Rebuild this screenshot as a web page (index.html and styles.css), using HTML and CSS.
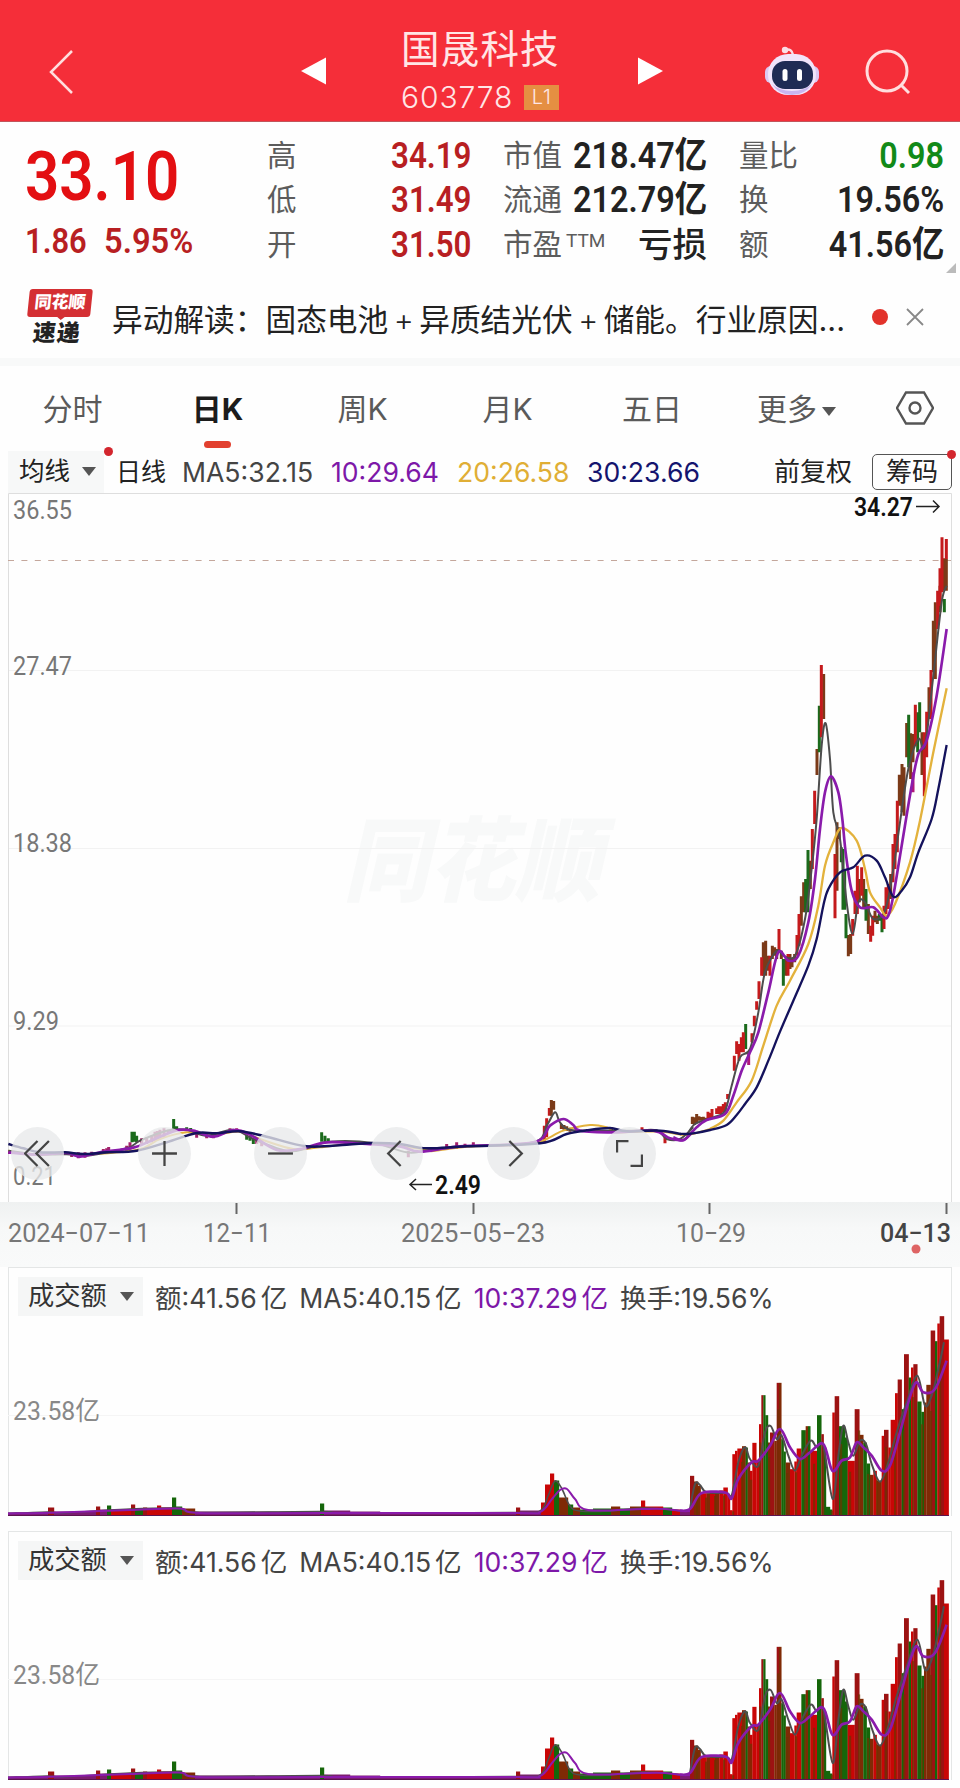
FILE: index.html
```
<!DOCTYPE html>
<html lang="zh-CN">
<head>
    <meta charset="UTF-8">
    <meta name="viewport" content="width=device-width, initial-scale=1.0">
    <title>国晟科技 603778</title>
    <link rel="stylesheet" href="styles.css">
</head>
<body>
    <header class="header">
        <svg class="back" viewBox="0 0 26 46"><path d="M24 2 3 23 24 44"/></svg>
        <svg class="prev" viewBox="0 0 26 28"><path d="M0 14 26 0V28Z"/></svg>
        <div class="title">
            <h1>国晟科技</h1>
            <div class="code"><span>603778</span><b>L1</b></div>
        </div>
        <svg class="next" viewBox="0 0 26 28"><path d="M26 14 0 0V28Z"/></svg>
        <svg class="robot" viewBox="0 0 54 50">
            <path d="M20 4Q27 2 28 9" fill="none" stroke="#fbdde6" stroke-width="2.5"/>
            <circle cx="20" cy="4" r="3.2" fill="#fbdde6"/>
            <rect x="0" y="20" width="12" height="17" rx="6" fill="#dcc8f2"/>
            <rect x="42" y="20" width="12" height="17" rx="6" fill="#dcc8f2"/>
            <rect x="3" y="8" width="48" height="41" rx="20" fill="#f1e4fa"/>
            <path d="M7 38Q14 49 27 49T47 38Q40 45 27 45T7 38Z" fill="#c9b5f0"/>
            <rect x="7" y="15" width="41" height="28" rx="13" fill="#1f2b54"/>
            <rect x="17.500" y="23" width="5" height="12" rx="2.500" fill="#fff"/>
            <rect x="32" y="23" width="5" height="12" rx="2.500" fill="#fff"/>
        </svg>
        <svg class="search" viewBox="0 0 46 46"><circle cx="22" cy="22" r="20"/><path d="M36 36 44 44"/></svg>
    </header>

    <section class="quote">
        <div class="price">
            <div class="last"><span class="din">33.10</span></div>
            <div class="change"><span class="din">1.86</span><span class="din pct">5.95%</span></div>
        </div>
        <dl class="stats c1">
            <dt>高</dt><dd class="up"><span class="din">34.19</span></dd>
            <dt>低</dt><dd class="up"><span class="din">31.49</span></dd>
            <dt>开</dt><dd class="up"><span class="din">31.50</span></dd>
        </dl>
        <dl class="stats c2">
            <dt>市值</dt><dd><span class="din">218.47亿</span></dd>
            <dt>流通</dt><dd><span class="din">212.79亿</span></dd>
            <dt>市盈<sup>TTM</sup></dt><dd class="loss">亏损</dd>
        </dl>
        <dl class="stats c3">
            <dt>量比</dt><dd class="down"><span class="din">0.98</span></dd>
            <dt>换</dt><dd><span class="din">19.56%</span></dd>
            <dt>额</dt><dd><span class="din">41.56亿</span></dd>
        </dl>
        <svg class="corner" viewBox="0 0 10 10"><path d="M10 0V10H0Z"/></svg>
    </section>

    <section class="news">
        <div class="logo">
            <span class="logo-top">同花顺</span>
            <span class="logo-bottom">速递</span>
        </div>
        <p>异动解读：固态电池<i>+</i>异质结光伏<i>+</i>储能。行业原因...</p>
        <i class="dot"></i>
        <svg class="close" viewBox="0 0 18 18"><path d="M1 1 17 17M17 1 1 17"/></svg>
    </section>

    <nav class="tabs">
        <a>分时</a>
        <a class="active">日K</a>
        <a>周K</a>
        <a>月K</a>
        <a>五日</a>
        <a class="more">更多<i class="caret"></i></a>
        <svg class="setting" viewBox="0 0 38 34"><path d="M10 1.500H28L37 17 28 32.500H10L1 17Z"/><circle cx="19" cy="17" r="5.500"/></svg>
    </nav>

    <div class="ma-bar">
        <span class="select">均线<i class="caret"></i></span>
        <span class="cycle">日线</span>
        <span class="ma ma5">MA5:32.15</span>
        <span class="ma ma10">10:29.64</span>
        <span class="ma ma20">20:26.58</span>
        <span class="ma ma30">30:23.66</span>
        <span class="adjust">前复权</span>
        <span class="chips">筹码</span>
    </div>

    <div class="kline">
        <svg id="kline" viewBox="8 494 952 709">
            <text class="watermark" x="343" y="895" textLength="258" lengthAdjust="spacingAndGlyphs">同花顺</text>
            <path class="grid" d="M8 671.500H951M8 849.500H951M8 1027H951"/>
            <path class="frame" d="M8.500 1203V494.500H951.500V1203"/>
            <path class="now" d="M8 561.500H951"/>
            <g class="axis">
                <text x="13" y="520" textLength="59" lengthAdjust="spacingAndGlyphs">36.55</text>
                <text x="13" y="676" textLength="59" lengthAdjust="spacingAndGlyphs">27.47</text>
                <text x="13" y="853" textLength="59" lengthAdjust="spacingAndGlyphs">18.38</text>
                <text x="13" y="1031" textLength="46" lengthAdjust="spacingAndGlyphs">9.29</text>
                <text x="13" y="1186" textLength="43" lengthAdjust="spacingAndGlyphs">0.21</text>
            </g>
            <g id="early" transform="translate(0 1090) scale(.33333)"></g>
            <g id="late" transform="translate(680 820) scale(.33333)"></g>
            <g class="mark">
                <text x="854" y="517" textLength="59" lengthAdjust="spacingAndGlyphs">34.27</text>
                <path d="M916 507.500H939M933 501.500 939 507.500 933 513.500"/>
                <text x="435" y="1195" textLength="46" lengthAdjust="spacingAndGlyphs">2.49</text>
                <path d="M432 1185.500H410M416 1180 410 1185.500 416 1191"/>
            </g>
        </svg>
        <div class="tools">
            <button><svg viewBox="0 0 26 26"><path d="M13 1 1 13 13 25M24 1 12 13 24 25"/></svg></button>
            <button><svg viewBox="0 0 26 26"><path d="M1 13H25M13 1V25"/></svg></button>
            <button><svg viewBox="0 0 26 26"><path d="M1 13H25"/></svg></button>
            <button><svg viewBox="0 0 26 26"><path d="M17 1 5 13 17 25"/></svg></button>
            <button><svg viewBox="0 0 26 26"><path d="M9 1 21 13 9 25"/></svg></button>
            <button><svg viewBox="0 0 26 26"><path d="M1 12V1H12M25 14V25H14"/></svg></button>
        </div>
    </div>

    <svg class="dates" viewBox="0 1203 960 65">
        <path d="M236.500 1204V1215M473.500 1204V1215M709.500 1204V1215M946.500 1204V1215"/>
        <text x="8" y="1243" textLength="142" lengthAdjust="spacingAndGlyphs">2024−07−11</text>
        <text x="203" y="1243" textLength="68" lengthAdjust="spacingAndGlyphs">12−11</text>
        <text x="401" y="1243" textLength="144" lengthAdjust="spacingAndGlyphs">2025−05−23</text>
        <text x="676" y="1243" textLength="70" lengthAdjust="spacingAndGlyphs">10−29</text>
        <text class="today" x="880" y="1243" textLength="71" lengthAdjust="spacingAndGlyphs">04−13</text>
        <circle cx="916" cy="1250" r="4.500"/>
    </svg>

    <section class="volume">
        <div class="volume-bar">
            <span class="select">成交额<i class="caret"></i></span>
            <span>额:41.56<em>亿</em></span>
            <span>MA5:40.15<em>亿</em></span>
            <span class="ma10">10:37.29<em>亿</em></span>
            <span>换手:19.56%</span>
        </div>
        <svg class="volume-chart" viewBox="8 1310 944 207"></svg>
    </section>
    <section class="volume">
        <div class="volume-bar">
            <span class="select">成交额<i class="caret"></i></span>
            <span>额:41.56<em>亿</em></span>
            <span>MA5:40.15<em>亿</em></span>
            <span class="ma10">10:37.29<em>亿</em></span>
            <span>换手:19.56%</span>
        </div>
        <svg class="volume-chart" viewBox="8 1310 944 207"></svg>
    </section>

    <script src="chart.js"></script>
</body>
</html>
```
FILE: styles.css
```
body {
    margin: 0;
    width: 960px;
    height: 1788px;
    overflow: hidden;
    background: #fefefe;
    color: #222;
    font-family: Inter, "Noto Sans CJK SC", sans-serif;
}
svg {
    display: block;
    flex: none;
}
.header {
    display: flex;
    align-items: flex-start;
    height: 122px;
    background: #f52e39;
    border-bottom: 1px solid #c2555b;
    box-sizing: border-box;
    color: #ffe6e6;
}
.back, .search {
    fill: none;
    stroke: #ffdede;
    stroke-width: 2.5;
}
.back {
    width: 26px;
    height: 46px;
    margin: 49px 0 0 48px;
}
.prev, .next {
    width: 25px;
    height: 28px;
    fill: #fff;
    margin-top: 57px;
}
.prev {
    margin-left: 227px;
}
.title {
    width: 162px;
    margin: 22px 0 0 75px;
}
h1 {
    margin: 0;
    font-size: 38.5px;
    line-height: 54px;
    font-weight: 400;
    letter-spacing: 1.2px;
    white-space: nowrap;
}
.code {
    display: flex;
    align-items: center;
    height: 42px;
    font-size: 30px;
    font-weight: 300;
    letter-spacing: .9px;
}
.code b {
    width: 35px;
    height: 25px;
    margin-left: 11px;
    background: #e58f42;
    font-size: 20px;
    line-height: 25px;
    font-weight: 300;
    text-align: center;
}
.next {
    margin-left: 75px;
}
.robot {
    width: 54px;
    height: 50px;
    margin: 46px 0 0 102px;
}
.search {
    width: 46px;
    height: 46px;
    margin: 49px 0 0 46px;
    stroke-width: 3;
}

.quote {
    position: relative;
    display: flex;
    height: 154px;
    padding-top: 12px;
    font-family: Roboto, "Noto Sans CJK SC", sans-serif;
}
.din {
    display: inline-block;
    transform: scaleX(.87);
    transform-origin: right center;
    white-space: nowrap;
    font-weight: 600;
}
.price {
    width: 267px;
    padding-left: 25px;
    box-sizing: border-box;
    color: #b81f22;
}
.price .din {
    transform-origin: left center;
}
.last {
    height: 85px;
    line-height: 86px;
    font-size: 69px;
    color: #e30f12;
}
.change {
    display: flex;
    height: 44px;
    line-height: 44px;
    font-size: 35.5px;
}
.change .din {
    width: 79px;
}
.change .pct {
    transform: scaleX(.92);
}
.stats {
    display: grid;
    grid-template-columns: auto 1fr;
    grid-auto-rows: 44.3px;
    margin: 0;
    line-height: 44px;
    white-space: nowrap;
}
.stats dt {
    font-size: 29.5px;
    color: #5c5c5c;
}
.stats dd {
    margin: 0;
    min-width: 0;
    display: flex;
    justify-content: flex-end;
    font-size: 36px;
}
.c1 { width: 204px; }
.c2 { width: 204px; margin-left: 32px; }
.c3 { width: 205px; margin-left: 32px; }
.c2 .din, .c3 .din {
    transform: scaleX(.9);
}
.stats sup {
    font-size: 19px;
    line-height: 0;
    margin-left: 4px;
    vertical-align: 8px;
}
.stats .loss {
    font-size: 34.5px;
    font-weight: 500;
}
.stats .up { color: #b81f22; }
.stats .down { color: #128a18; }
.corner {
    position: absolute;
    right: 4px;
    bottom: 15px;
    width: 10px;
    height: 10px;
    fill: #bbb;
}

.news {
    display: flex;
    align-items: center;
    height: 70px;
    padding: 0 36px 6px 27px;
    margin-top: -6px;
}
.logo {
    flex: none;
    width: 63px;
    height: 56px;
    margin-right: 3px;
    text-align: center;
    font-weight: 900;
    transform: skewX(-6deg);
}
.logo-top, .logo-bottom {
    display: block;
    white-space: nowrap;
}
.logo-top {
    position: relative;
    height: 28px;
    line-height: 27px;
    border-radius: 3px;
    background: #d42f33;
    color: #fff;
    font-size: 17px;
}
.logo-top::after {
    content: '';
    position: absolute;
    left: 29px;
    top: 27px;
    border: 5px solid transparent;
    border-top: 4px solid #d42f33;
    border-bottom: 0;
}
.logo-bottom {
    font-size: 23px;
    line-height: 32px;
    letter-spacing: 1px;
}
.news p {
    width: 745px;
    margin: 0 0 0 19px;
    font-size: 30.7px;
    white-space: nowrap;
}
.news p i {
    display: inline-block;
    width: 31px;
    text-align: center;
    font-style: normal;
    font-weight: 300;
}
.dot {
    width: 16px;
    height: 16px;
    border-radius: 50%;
    background: #e2322b;
    margin-left: 17px;
}
.close {
    width: 18px;
    height: 18px;
    margin-left: 18px;
    fill: none;
    stroke: #888;
    stroke-width: 1.8;
}

.tabs {
    display: flex;
    align-items: center;
    height: 84px;
    border-top: 8px solid #f8f9f9;
    padding-left: 8px;
    font-size: 30px;
    color: #5a5a5a;
}
.tabs a {
    position: relative;
    top: -1px;
    width: 129px;
    text-align: center;
}
.tabs a:nth-child(2),
.tabs a:nth-child(3),
.tabs a:nth-child(4) {
    width: 145px;
}
.tabs a:nth-child(5) {
    width: 144px;
}
.tabs a.active {
    margin-left: 8px;
    color: #1c1c1c;
    font-weight: 700;
}
.tabs .active::after {
    content: '';
    position: absolute;
    left: 59px;
    bottom: -19px;
    width: 27px;
    height: 7px;
    border-radius: 4px;
    background: #e2402f;
}
.tabs .more {
    width: 145px;
}
.caret {
    display: inline-block;
    border: 7px solid transparent;
    border-top: 9px solid #555;
    border-bottom: 0;
    vertical-align: 4px;
    margin-left: 7px;
}
.more .caret {
    margin-left: 5px;
}
.setting {
    width: 38px;
    height: 34px;
    margin-left: 27px;
    fill: none;
    stroke: #555;
    stroke-width: 2.4;
}

.ma-bar {
    position: relative;
    display: flex;
    align-items: center;
    height: 43px;
    margin-left: 8px;
    font-size: 26px;
    line-height: 40px;
    color: #222;
    white-space: nowrap;
}
.ma-bar .select {
    position: relative;
    width: 96px;
    height: 42px;
    line-height: 40px;
    padding-left: 11px;
    box-sizing: border-box;
    background: #f7f8f8;
    font-size: 25.5px;
}
.ma-bar .caret {
    margin-left: 12px;
}
.ma-bar .select::after, .chips::after {
    content: '';
    position: absolute;
    width: 9px;
    height: 9px;
    border-radius: 50%;
    background: #d3262e;
    right: -9px;
    top: -4px;
}
.cycle {
    width: 66px;
    margin-left: 12px;
    font-size: 25px;
}
.ma {
    font-size: 26.6px;
}
.ma5 { width: 149px; color: #444; }
.ma10 { color: #7d18a8; }
.ma-bar .ma10 { width: 126px; }
.ma20 { width: 130px; color: #e0ae35; }
.ma30 { width: 187px; color: #14146e; }
.adjust {
    width: 98px;
}
.chips {
    position: relative;
    width: 78px;
    height: 34px;
    line-height: 34px;
    border: 1px solid #555;
    border-radius: 5px;
    text-align: center;
}
.chips::after {
    right: -5px;
    top: -5px;
}

.kline {
    position: relative;
    height: 709px;
    margin-left: 8px;
}
.kline > svg {
    width: 952px;
    height: 709px;
}
.grid {
    stroke: #f2f2f2;
}
.frame {
    fill: none;
    stroke: #dedede;
}
.now {
    stroke: #c4a79c;
    stroke-dasharray: 6 7.4;
}
.watermark {
    font: italic 900 92px "Noto Sans CJK SC";
    fill: #f8f9f9;
}
.axis, .mark, .dates {
    font-family: Roboto, sans-serif;
    font-size: 26px;
    fill: #777;
}
.mark {
    fill: #111;
    font-weight: 600;
}
.mark path {
    fill: none;
    stroke: #222;
    stroke-width: 1.5;
}
.tools {
    position: absolute;
    left: 3px;
    top: 634px;
    display: flex;
    gap: 63.3px;
}
.tools button {
    width: 53px;
    height: 53px;
    padding: 13px;
    border: 0;
    border-radius: 50%;
    background: rgba(232, 233, 234, .78);
}
.tools button:first-child {
    margin-right: 10.500px;
}
.tools svg {
    width: 27px;
    height: 27px;
    fill: none;
    stroke: #444;
    stroke-width: 2.2;
}

.dates {
    width: 960px;
    height: 65px;
    background: linear-gradient(#eff1f1, #f7f8f8 40%, #f9fafa);
}
.dates path {
    stroke: #666;
    stroke-width: 2;
}
.dates .today {
    fill: #444;
    font-weight: 500;
}
.dates circle {
    fill: #de6464;
}

.volume {
    height: 249px;
    margin: 0 8px 15px;
    border: solid #e4e6e6;
    border-width: 1px 1px 0;
    box-sizing: border-box;
}
.volume-bar {
    display: flex;
    align-items: center;
    height: 41px;
    padding: 8px 0 0 9px;
    font-size: 26.600px;
    color: #444;
    white-space: nowrap;
}
.volume-bar .select {
    width: 125px;
    height: 39px;
    line-height: 37px;
    padding-left: 10px;
    box-sizing: border-box;
    background: #f5f6f6;
    font-size: 26.300px;
    color: #333;
}
.volume-bar .caret {
    margin-left: 13px;
}
.volume-bar span + span {
    margin-left: 12px;
}
.volume-bar em {
    font-style: normal;
    margin-left: 4px;
}
.volume-bar .ma10 {
    color: #7d18a8;
}
.volume-chart {
    width: 944px;
    height: 207px;
    margin: -8px 0 0 -1px;
    overflow: visible;
}
.vol-label {
    font-family: Roboto, "Noto Sans CJK SC", sans-serif;
    font-size: 26px;
    fill: #888;
}
```
FILE: chart.js
```
const RED = '#c41a1c', BROWN = '#7b3a18', GREEN = '#1b6a1c';
const MA5 = '#4d4d4d', MA10 = '#8a1bab', MA20 = '#e3b23c', MA30 = '#14125c';

function add(parent, tag, attrs, text) {
    const el = document.createElementNS('http://www.w3.org/2000/svg', tag);
    for (const k in attrs) el.setAttribute(k, attrs[k]);
    if (text) el.textContent = text;
    parent.appendChild(el);
    return el;
}

// "x,y x,y ..." -> smooth curve through every point
function line(parent, str, color, width) {
    const p = str.trim().split(/\s+/).map(s => s.split(',').map(Number));
    let d = `M${p[0]}`;
    for (let i = 0; i < p.length - 1; i++) {
        const a = p[i - 1] || p[i], b = p[i], c = p[i + 1], e = p[i + 2] || c;
        d += `C${b[0] + (c[0] - a[0]) / 6},${b[1] + (c[1] - a[1]) / 6} ${c[0] - (e[0] - b[0]) / 6},${c[1] - (e[1] - b[1]) / 6} ${c}`;
    }
    add(parent, 'path', { d, fill: 'none', stroke: color, 'stroke-width': width, 'stroke-linejoin': 'round' });
}

// "x,high,low ..."
function candles(parent, str, color) {
    const d = str.trim().split(/\s+/).map(s => {
        const [x, a, b] = s.split(',');
        return `M${x} ${a}V${b}`;
    }).join('');
    add(parent, 'path', { d, stroke: color, 'stroke-width': 9 });
}

const early = document.getElementById('early');
candles(early, '396,128,160 403,128,158 410,140,160 521,90,122 530,112,124 560,115,126 572,117,128 740,135,152 750,140,155 760,148,165 965,130,158 975,140,160 985,148,162', GREEN);
candles(early, '27,183,195 215,190,204 235,190,208 255,190,206 275,188,200 310,180,195 326,174,192 320,178,192 380,170,185 390,160,182 425,148,168 440,145,165 455,140,160 465,128,155 472,126,152 480,122,150 492,118,145 505,122,135 590,125,146 620,132,148 640,132,148 690,118,130 710,118,130 770,145,165 785,150,172 1225,185,205 1340,165,182 1370,160,180 1395,164,176 1420,160,172', '#a3216a');
candles(early, '1627,155,165 1633,110,160 1640,88,145 1648,57,80 1995,145,163 1926,115,128', RED);
candles(early, '1654,33,80 1661,36,62 1684,105,120 1692,108,122 1700,112,126 1710,116,128 1835,115,125', BROWN);
line(early, '25,185 100,197 200,192 240,197 410,183 480,150 560,130 650,135 720,128 780,150 880,180 960,175 1100,162 1280,182 1300,186 1400,173 1540,168 1620,158 1690,125 1770,108 1820,115 1850,130 1920,128 1990,128 2060,138 2130,120', MA20, 6);
line(early, '25,185 110,196 200,196 260,200 380,178 420,155 500,125 560,122 620,140 700,122 760,150 860,186 920,178 990,158 1120,162 1220,190 1280,185 1400,172 1600,160 1640,110 1665,70 1680,100 1710,122 1800,125 1900,125 1970,124 2000,150 2040,150 2080,115', MA5, 6);
line(early, '25,190 110,197 200,192 240,203 300,190 400,176 460,152 530,124 580,125 640,143 700,123 750,137 830,183 900,180 980,160 1100,165 1200,172 1260,188 1380,172 1600,160 1650,110 1690,90 1720,108 1740,125 1840,130 1960,125 2010,148 2050,153 2080,125', MA10, 8);
line(early, '25,165 70,178 120,190 195,190 250,195 320,190 410,185 500,160 590,132 650,133 720,127 800,143 920,172 1040,167 1120,162 1200,165 1280,178 1400,172 1620,163 1700,135 1760,124 1830,117 1880,127 1980,125 2042,135', MA30, 7.5);

const late = document.getElementById('late');
candles(late, `37,893,915 43,895,918 50,885,912 57,892,905 63,894,905 70,893,905 77,896,905 250,370,470 257,365,470 264,410,455
    277,380,420 284,385,410 290,390,420 304,395,420 317,420,470 330,405,450 336,420,445 344,405,430 364,232,320 371,190,280 391,125,210
    411,-210,-132 431,-435,-300 471,10,215 478,25,60 505,348,412 512,345,405 538,180,250 551,180,270 565,255,345 585,275,310 592,290,315
    632,165,240 658,-133,-40 666,-165,-20 672,-155,-10 680,-288,-185 692,-257,-120 699,-255,-170 726,-260,-132 747,-395,-300
    760,-595,-440 766,-650,-420 780,-700,-620 793,-782,-685 799,-780,-685`, BROWN);
candles(late, `197,615,690 310,420,500 377,180,280 384,93,280 418,-340,-200 484,85,130 489,90,272 494,150,272 498,285,358 558,210,305
    598,285,305 606,285,340 686,-313,-155 713,-320,-200 719,-350,-260 793,-660,-620`, GREEN);
candles(late, `84,878,900 90,882,902 96,870,900 110,868,885 116,862,885 123,862,885 130,855,880 136,850,880 143,825,840 163,710,755
    170,667,705 177,675,725 184,655,700 190,640,700 216,643,670 223,590,622 230,547,572 237,487,540 245,415,470 270,410,470
    297,330,400 324,405,470 351,348,410 357,285,380 397,30,150 404,-85,15 424,-462,-245 465,105,298 518,300,350 525,215,285
    532,140,285 545,145,230 572,320,368 578,290,350 612,260,330 618,205,285 625,195,270 639,75,190 645,45,150 652,-55,100
    706,-343,-220 733,-260,-68 740,-322,-185 753,-447,-300 773,-685,-570 780,-752,-640 786,-845,-680 799,-840,-780`, RED);
candles(late, '206,700,738 699,-140,-80', '#b0187a');
line(late, '20,950 45,915 100,895 135,875 155,800 180,715 210,690 235,580 255,460 290,395 310,410 345,410 375,300 395,150 410,0 425,-220 437,-287 450,-180 460,-20 480,60 500,250 518,345 535,250 555,250 580,300 615,275 640,150 660,10 685,-150 715,-240 735,-220 760,-430 785,-650 800,-700', MA5, 6);
line(late, '90,930 130,905 170,850 215,785 250,680 290,560 330,485 385,375 415,260 435,140 460,70 485,27 530,65 555,150 570,220 600,265 620,290 645,255 690,130 720,5 760,-200 800,-392', MA20, 7);
line(late, '-20,955 12,963 50,925 80,903 135,885 160,830 185,755 210,700 235,640 265,520 295,400 325,425 355,410 385,310 405,180 420,30 435,-80 453,-128 475,-80 487,0 497,100 515,215 540,265 580,265 610,295 625,290 640,230 665,80 695,-100 715,-195 740,-235 770,-370 800,-570', MA10, 8);
line(late, '0,945 40,943 90,933 140,918 170,888 195,855 230,805 265,725 300,638 340,545 385,440 410,360 430,260 445,210 480,160 520,145 555,110 590,125 615,175 640,233 665,215 690,175 715,100 755,0 775,-90 800,-222', MA30, 7);

// turnover: left edge, height, colour; each bar runs to the next left edge
const quiet = [
    [8, 3, 'm'], [48, 8, 'd'], [54, 4, 'm'], [96, 9, 'd'], [100, 6, 'm'], [107, 10, 'g'], [111, 6, 'r'], [131, 11, 'd'], [135, 7, 'g'],
    [143, 8, 'd'], [147, 6, 'r'], [157, 10, 'r'], [161, 8, 'r'], [172, 18, 'g'], [176, 9, 'g'], [182, 7, 'b'], [195, 4, 'm'],
    [320, 12, 'g'], [324, 5, 'm'], [350, 4, 'm'], [380, 3, 'm'], [516, 8, 'd'], [520, 5, 'm'], [541, 13, 'r'], [545, 31, 'r'],
    [550, 42, 'r'], [554, 35, 'g'], [559, 18, 'b'], [568, 11, 'g'], [573, 8, 'b'], [580, 6, 'g'], [593, 7, 'g'], [611, 9, 'b'],
    [620, 7, 'g'], [630, 9, 'b'], [641, 15, 'r'], [645, 9, 'r'], [663, 8, 'g'], [672, 6, 'r'], [680, 5, 'm'], [690, 0, 'm']
];
const busy = [
    [30, 560, 'd'], [42, 577, 'b'], [54, 590, 'b'], [62, 612, 'r'], [80, 612, 'b'], [90, 606, 'r'], [105, 612, 'b'], [118, 604, 'r'],
    [130, 595, 'r'], [143, 620, 'r'], [150, 663, 'r'], [157, 495, 'r'], [165, 485, 'r'], [172, 478, 'r'], [186, 471, 'b'],
    [197, 475, 'g'], [203, 520, 'b'], [210, 545, 'r'], [217, 461, 'r'], [229, 512, 'r'], [237, 405, 'r'], [244, 318, 'd'], [250, 318, 'g'], [256, 378, 'g'],
    [264, 460, 'b'], [270, 430, 'd'], [283, 455, 'b'], [290, 281, 'd'], [297, 281, 'b'], [304, 450, 'g'], [311, 487, 'g'], [317, 520, 'b'],
    [330, 540, 'r'], [343, 517, 'r'], [350, 478, 'r'], [364, 423, 'g'], [377, 411, 'b'], [384, 411, 'g'], [391, 485, 'r'], [411, 378, 'g'],
    [424, 435, 'd'], [431, 475, 'g'], [438, 653, 'g'], [450, 661, 'g'], [457, 370, 'r'], [464, 321, 'd'], [477, 411, 'g'],
    [495, 445, 'g'], [503, 515, 'r'], [524, 360, 'd'], [538, 437, 'b'], [550, 460, 'g'], [560, 523, 'g'], [570, 557, 'b'],
    [580, 545, 'r'], [590, 575, 'b'], [605, 440, 'r'], [612, 422, 'd'], [625, 475, 'r'], [632, 392, 'r'], [645, 312, 'r'],
    [653, 271, 'd'], [665, 360, 'g'], [672, 195, 'd'], [686, 265, 'g'], [693, 235, 'r'], [700, 225, 'd'], [712, 337, 'g'],
    [724, 368, 'g'], [732, 340, 'b'], [739, 287, 'b'], [752, 124, 'd'], [765, 156, 'g'], [772, 103, 'r'], [779, 81, 'd'], [792, 151, 'r'], [806, 679, 'r']
].map(([x, y, c]) => [680 + x / 3, (679 - y) / 3, c]);
const fill = { r: '#c90606', d: '#9c1212', b: '#7f2a05', g: '#15660a', m: '#7c1c70' };

document.querySelectorAll('.volume-chart').forEach(svg => {
    add(svg, 'path', { d: 'M8 1416.5H951', stroke: '#f5f5f5' });
    const bars = quiet.slice(0, -1).concat(busy);
    bars.forEach(([x, h, c], i) => {
        if (i === bars.length - 1) return;
        add(svg, 'rect', { x, y: 1516.5 - h, width: bars[i + 1][0] - x + .2, height: h, fill: fill[c] });
    });
    for (let x = 696; x < 946; x += 9) {
        const bar = bars.filter(b => b[0] <= x).pop();
        add(svg, 'rect', { x, y: 1516.5 - bar[1] * .8, width: 2.2, height: bar[1] * .8, fill: '#6b3500', opacity: .7 });
    }
    const late = add(svg, 'g', { transform: 'translate(680 1290) scale(.33333)' });
    line(svg, '8,1514.5 48,1513 60,1514 96,1512 130,1510 172,1509 182,1510 200,1513.5 320,1512.5 350,1514 515,1513.5 540,1512 548,1497 555,1482 562,1490 570,1507 580,1512 610,1512 642,1509 665,1510 682,1512 690,1512', MA5, 1.6);
    line(svg, '8,1514.5 60,1513.5 130,1511 180,1509.5 200,1514 320,1514 515,1514 540,1513 552,1500 560,1491 567,1490 575,1500 588,1511 642,1510 665,1510 682,1512 690,1512', MA10, 2);
    line(late, '30,660 45,585 60,588 80,610 140,612 155,620 175,520 195,475 210,510 235,530 255,430 272,411 290,450 305,440 325,500 345,545 365,500 392,455 410,475 430,470 458,630 475,500 490,410 505,460 520,500 540,455 558,465 575,525 600,578 625,520 650,430 680,340 712,260 735,350 755,320 775,240 792,160', MA5, 6);
    line(late, '0,665 30,660 60,615 100,608 140,612 155,628 175,570 215,520 235,515 270,470 300,420 330,475 360,510 390,490 430,465 457,545 485,515 510,505 530,460 550,475 575,500 605,545 630,530 660,430 685,340 708,280 730,310 765,300 800,215', MA10, 8);
    add(svg, 'path', { d: 'M8 1516.5H949', stroke: '#5c1450' });
    add(svg, 'text', { x: 13, y: 1421, class: 'vol-label', textLength: 87, lengthAdjust: 'spacingAndGlyphs' }, '23.58亿');
});
```
